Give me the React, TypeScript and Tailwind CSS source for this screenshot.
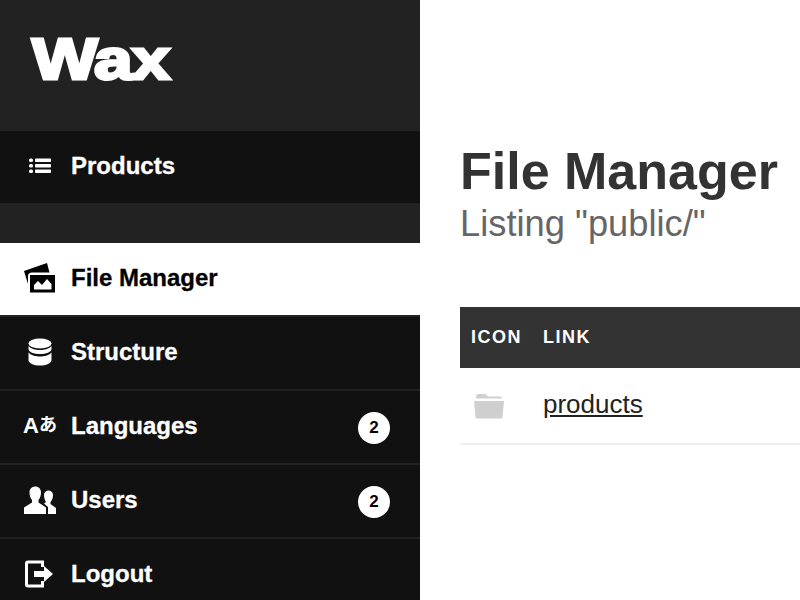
import React from "react";

const Font = "font-['Liberation_Sans',Arial,sans-serif]";

function ListIcon() {
  return (
    <svg width="24" height="18" viewBox="0 0 24 18" fill="white">
      <rect x="1" y="1.5" width="4" height="3.5" rx="1.5" />
      <rect x="1" y="7" width="4" height="3.5" rx="1.5" />
      <rect x="1" y="12.5" width="4" height="3.5" rx="1.5" />
      <rect x="7" y="1.5" width="16" height="3.5" rx="0.8" />
      <rect x="7" y="7" width="16" height="3.5" rx="0.8" />
      <rect x="7" y="12.5" width="16" height="3.5" rx="0.8" />
    </svg>
  );
}

function ImagesIcon() {
  return (
    <svg width="32" height="30" viewBox="0 0 32 30">
      <path d="M0 8 L23 0 L25.5 9.5 L8 9.5 C5.5 9.5 4 11 4 13 V21 Z" fill="black" />
      <path
        fillRule="evenodd"
        d="M6 12 H31 V29.5 H6 Z M10 26.5 V22 L14 18 L18 22 L23 16 L27.5 21 V26.5 Z"
        fill="black"
      />
    </svg>
  );
}

function DbIcon() {
  return (
    <svg width="24" height="28" viewBox="0 0 24 28" fill="white">
      <ellipse cx="12" cy="5.5" rx="11.5" ry="5" />
      <path d="M0.5 8 V11 C0.5 14 6 16 12 16 S23.5 14 23.5 11 V8 C21 11 16 12 12 12 S3 11 0.5 8 Z" />
      <path d="M0.5 14.5 V22 C0.5 25.5 6 27.5 12 27.5 S23.5 25.5 23.5 22 V14.5 C21 17.5 16 18.5 12 18.5 S3 17.5 0.5 14.5 Z" />
    </svg>
  );
}

function UsersIcon() {
  return (
    <svg width="32" height="28" viewBox="0 0 32 28" fill="white">
      <path d="M20 9 C20 3 29 3 29 9 C29 12 28 14.5 26.5 16 V18 L32 22 V28 H24 V21 L20 17.5 C20.5 17 21.5 16.5 22 16 C20.8 14 20 11.5 20 9 Z" />
      <path d="M5.5 6.5 C5.5 -1.5 17 -1.5 17 6.5 C17 9.5 16 12.5 14.5 14 V16.5 L22 21.5 V28 H0 V21.5 L8 16.5 V14 C6.5 12.5 5.5 9.5 5.5 6.5 Z" />
    </svg>
  );
}

function LogoutIcon() {
  return (
    <svg width="30" height="28" viewBox="0 0 30 28" fill="none">
      <path d="M17.5 7 V2 H3 C2 2 1.5 2.5 1.5 3.5 V24.5 C1.5 25.5 2 26 3 26 H17.5 V21" stroke="white" strokeWidth="3" />
      <path d="M9 11 H19 V6 L28 14 L19 22 V17 H9 Z" fill="white" />
    </svg>
  );
}

function FolderIcon() {
  return (
    <svg width="32" height="26" viewBox="0 0 32 26" fill="#cfcfcf">
      <path d="M3 4 C3 2 4 1 6 1 H11 C13 1 14 2 15 3.5 H27 C28.5 3.5 29 4.5 29 5.5 H3 Z" />
      <path d="M1 8 H31 L29.5 24 C29.4 25 28.8 25.5 28 25.5 H4 C3.2 25.5 2.6 25 2.5 24 Z" />
    </svg>
  );
}

function NavRow({
  icon,
  label,
  badge,
  active,
  last,
}: {
  icon: React.ReactNode;
  label: string;
  badge?: string;
  active?: boolean;
  last?: boolean;
}) {
  return (
    <div
      className={`flex h-[74px] shrink-0 items-center border-b-2 border-[#222222] ${last ? "border-b-0" : ""} ${
        active ? "bg-white text-black" : "bg-[#111111] text-white"
      }`}
    >
      <div className="flex w-[71px] shrink-0 justify-center pb-[2px] pl-[9px]">{icon}</div>
      <span className="flex-1 pb-[2px] text-[24px] font-bold [-webkit-text-stroke:0.3px_currentColor]">{label}</span>
      {badge && (
        <span className="mt-[2px] mr-[30px] flex h-[32px] w-[32px] items-center justify-center rounded-full bg-white text-[17px] font-bold text-black">
          {badge}
        </span>
      )}
    </div>
  );
}

export default function App() {
  return (
    <div className={`flex h-[600px] w-[800px] overflow-hidden bg-white ${Font}`}>
      <aside className="flex h-full w-[420px] shrink-0 flex-col overflow-hidden bg-[#222222]">
        <div className="flex h-[131px] shrink-0 items-center pl-[32px] pb-[13px]">
          <span className="origin-left scale-x-[1.2] text-[58px] leading-none font-bold tracking-[-1px] text-white [-webkit-text-stroke:3px_white]">
            Wax
          </span>
        </div>
        <div className="flex h-[72px] shrink-0 items-center bg-[#111111] text-white">
          <div className="flex w-[71px] shrink-0 justify-center pb-[2px] pl-[9px]">
            <ListIcon />
          </div>
          <span className="pb-[2px] text-[24px] font-bold [-webkit-text-stroke:0.3px_currentColor]">Products</span>
        </div>
        <div className="h-[40px] shrink-0" />
        <NavRow icon={<ImagesIcon />} label="File Manager" active />
        <NavRow icon={<DbIcon />} label="Structure" />
        <NavRow
          icon={
            <span className="flex items-baseline leading-none font-bold whitespace-nowrap">
              <span className="text-[22px]">A</span>
              <span className="-translate-y-[2px] text-[18px] font-['Noto_Sans_CJK_JP',sans-serif]">あ</span>
            </span>
          }
          label="Languages"
          badge="2"
        />
        <NavRow icon={<UsersIcon />} label="Users" badge="2" />
        <NavRow icon={<LogoutIcon />} label="Logout" last />
      </aside>
      <main className="min-w-0 flex-1 pt-[144px] pl-[40px]">
        <h1 className="text-[52px] leading-[54px] font-bold whitespace-nowrap text-[#333333]">File Manager</h1>
        <p className="mt-[4px] text-[36.3px] leading-[44px] whitespace-nowrap text-[#666666]">Listing "public/"</p>
        <div className="mt-[61px] flex h-[61px] items-center bg-[#333333] text-[18px] font-bold tracking-[1.5px] text-white">
          <span className="w-[83px] pl-[11px]">ICON</span>
          <span>LINK</span>
        </div>
        <div className="flex h-[77px] items-center border-b-2 border-[#eeeeee]">
          <div className="flex w-[83px] justify-start pl-[13px]">
            <FolderIcon />
          </div>
          <a href="#" className="pb-[2px] text-[26px] text-[#222222] underline">
            products
          </a>
        </div>
      </main>
    </div>
  );
}
